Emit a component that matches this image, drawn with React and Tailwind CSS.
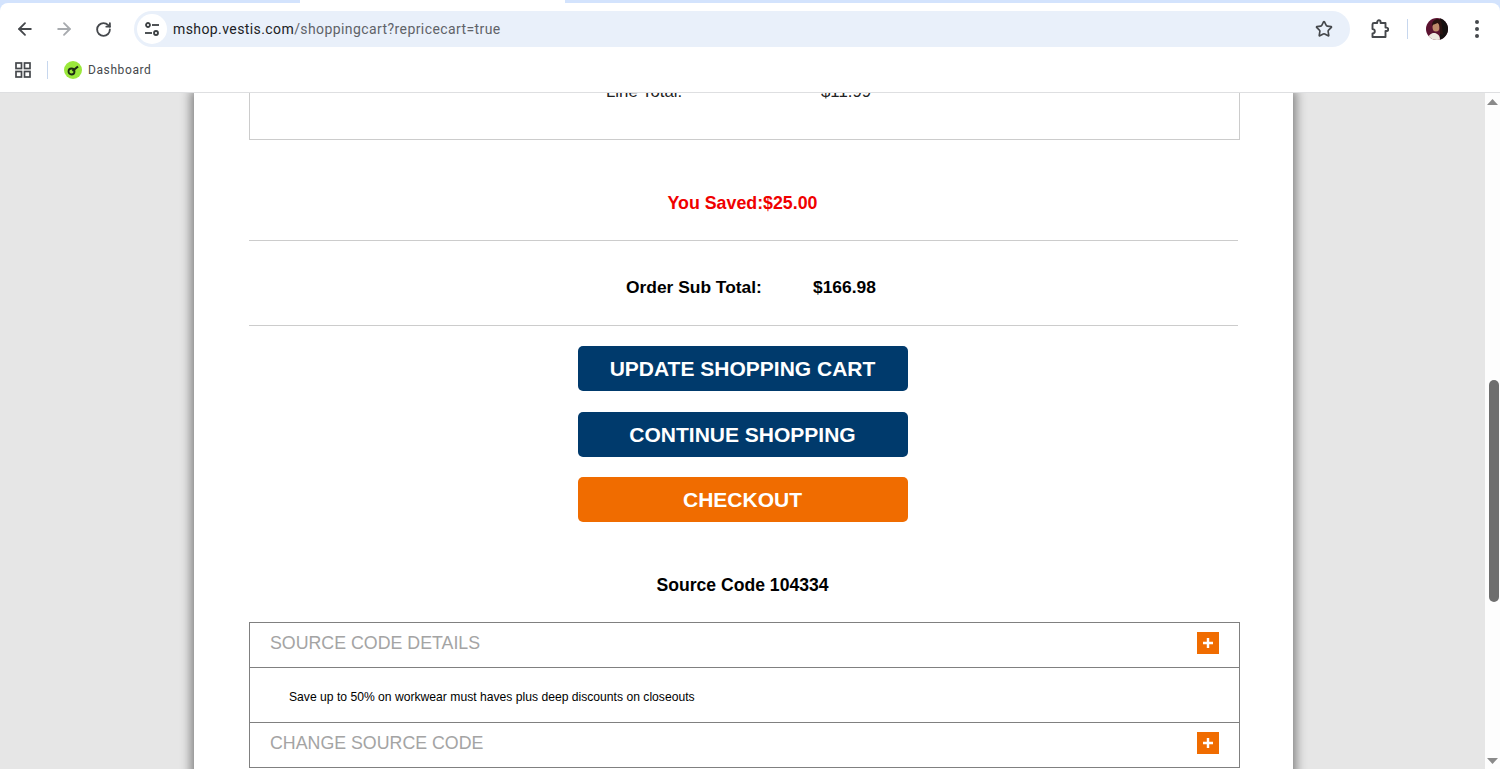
import React from "react";
import { ArrowLeft, ArrowRight, RotateCw, Star } from "lucide-react";

const sans = "font-['Liberation_Sans',Arial,sans-serif]";

function Tune() {
  return (
    <svg width="18" height="18" viewBox="0 0 18 18" fill="none" stroke="#3c4043" strokeWidth="1.8">
      <circle cx="5" cy="5" r="2" />
      <path d="M9 5h7" />
      <circle cx="13" cy="13" r="2" />
      <path d="M2 13h7" />
    </svg>
  );
}

function Puzzle() {
  return (
    <svg width="20" height="20" viewBox="0 0 20 20" fill="none" stroke="#45484c" strokeWidth="1.9" strokeLinejoin="round">
      <path d="M5 4h3.2V3a1.7 1.7 0 0 1 3.4 0v1H16.500v4.600h1a1.700 1.700 0 0 1 0 3.400h-1V18H3.500v-3.500c1.500 0 2.300-.9 2.300-2.200S5 10.100 3.500 10.100V5.500C3.500 4.600 4.100 4 5 4z" />
    </svg>
  );
}

function Apps() {
  return (
    <svg width="16" height="16" viewBox="0 0 16 16" fill="none" stroke="#45484c" strokeWidth="1.7">
      <rect x="1" y="1" width="5.500" height="5.500" />
      <rect x="9.500" y="1" width="5.500" height="5.500" />
      <rect x="1" y="9.500" width="5.500" height="5.500" />
      <rect x="9.500" y="9.500" width="5.500" height="5.500" />
    </svg>
  );
}

function Favicon() {
  return (
    <svg width="18" height="18" viewBox="0 0 18 18">
      <circle cx="9" cy="9" r="9" fill="#9be83c" />
      <circle cx="7.500" cy="10.500" r="3" fill="none" stroke="#1c2a12" strokeWidth="1.800" />
      <path d="M8.500 10 14 5.500" stroke="#1c2a12" strokeWidth="2.200" />
    </svg>
  );
}

function Avatar() {
  return (
    <svg width="22" height="22" viewBox="0 0 22 22">
      <defs>
        <clipPath id="av"><circle cx="11" cy="11" r="11" /></clipPath>
      </defs>
      <g clipPath="url(#av)">
        <rect width="22" height="22" fill="#5b1230" />
        <rect x="14" width="8" height="22" fill="#15100f" />
        <path d="M2 22c0-5 3-7 6-7s6 2 6 7z" fill="#efe6df" />
        <ellipse cx="10" cy="9" rx="3.500" ry="4.500" fill="#c08a6a" />
        <path d="M6 8c0-5 3-7 6-7s4 4 4 8l1 8-3-1c0-4 0-9-2-11-2 1-5 1-6 3z" fill="#2a1210" />
      </g>
    </svg>
  );
}

function Plus() {
  return (
    <div className="w-[22px] h-[22px] mb-[5px] bg-[#f06c00] flex items-center justify-center">
      <svg width="12" height="12" viewBox="0 0 12 12">
        <path d="M6 1v10M1 6h10" stroke="#fff" strokeWidth="2.400" />
      </svg>
    </div>
  );
}

function CartButton({ label, color, mt }) {
  return (
    <button className={`w-[330px] h-[45px] rounded-[5px] text-white text-[21px] font-bold ${color} ${mt} ${sans}`}>
      {label}
    </button>
  );
}

function AccordionHead({ label, border, height }) {
  return (
    <div className={`flex items-center justify-between pl-5 pr-[20px] ${height} ${border}`}>
      <span className="text-[17.8px] text-[#a4a4a4] leading-none mb-[2px]">{label}</span>
      <Plus />
    </div>
  );
}

export default function App() {
  return (
    <div className={`h-[769px] w-[1500px] overflow-hidden flex flex-col bg-[#d3e3fd] ${sans}`}>
      <div className="h-[3px] shrink-0 flex">
        <div className="ml-[300px] w-[265px] bg-white" />
      </div>

      <div className="h-[47px] shrink-0 flex items-center bg-white rounded-t-[8px] pt-[5px]">
        <div className="w-[134px] shrink-0 flex items-center pl-[15px] gap-[19px]">
          <ArrowLeft size={20} color="#45484c" strokeWidth={2.200} />
          <ArrowRight size={20} color="#a8abaf" strokeWidth={2.200} />
          <RotateCw size={17} color="#45484c" strokeWidth={2.600} className="ml-[2px]" />
        </div>
        <div className="w-[1216px] h-[36px] rounded-full bg-[#e9f0fa] flex items-center pl-[3px] pr-[17px]">
          <div className="w-[30px] h-[30px] rounded-full bg-white flex items-center justify-center shrink-0">
            <Tune />
          </div>
          <div className="ml-[6px] flex-1 text-[14px] tracking-[0.41px] font-['Roboto',sans-serif] text-[#5f6368] whitespace-nowrap">
            <span className="text-[#202124]">mshop.vestis.com</span>/shoppingcart?repricecart=true
          </div>
          <Star size={18} color="#45484c" strokeWidth={2.200} />
        </div>
        <div className="flex items-center ml-[19px]">
          <Puzzle />
          <div className="w-px h-[20px] bg-[#c7d7ee] ml-[18px]" />
          <div className="ml-[18px]"><Avatar /></div>
          <div className="ml-[27px] flex flex-col gap-[3px]">
            <div className="w-[4px] h-[4px] rounded-full bg-[#45484c]" />
            <div className="w-[4px] h-[4px] rounded-full bg-[#45484c]" />
            <div className="w-[4px] h-[4px] rounded-full bg-[#45484c]" />
          </div>
        </div>
      </div>

      <div className="h-[43px] shrink-0 flex items-center pl-[15px] pb-[3px] border-b border-[#dedfe1] bg-white">
        <Apps />
        <div className="w-px h-[18px] bg-[#c7d7ee] ml-[16px]" />
        <div className="ml-[16px]"><Favicon /></div>
        <span className="ml-[6px] text-[12px] tracking-[0.6px] text-[#45484c] font-['Roboto',sans-serif]">Dashboard</span>
      </div>

      <div className="flex-1 min-h-0 flex overflow-hidden bg-[#e6e6e6]">
        <div className="flex-1 flex justify-center overflow-hidden pl-[194px] pr-[192px]">
          <div className="w-[1099px] shrink-0 bg-white px-[55px] shadow-[0_0_10px_3px_rgba(0,0,0,0.45)] h-[1000px]">
            <div className="h-[47px] w-[991px] border-x border-b border-[#cccccc] flex text-[16.8px] text-[#222] overflow-hidden">
              <div className="flex -mt-[10px] h-[18px] leading-[18px]">
                <span className="ml-[356px] w-[215px]">Line Total:</span>
                <span>$11.99</span>
              </div>
            </div>

            <div className="h-[101px] w-[989px] border-b border-[#cccccc] flex items-center justify-center text-[17.8px] font-bold text-[#f00000] pt-[27px] pr-[2px]">
              <span>You Saved:$25.00</span>
            </div>

            <div className="h-[85px] w-[989px] border-b border-[#cccccc] flex items-center text-[17.4px] font-bold text-black">
              <span className="ml-[377px] w-[187px] mt-[8px]">Order Sub Total:</span>
              <span className="mt-[8px]">$166.98</span>
            </div>

            <div className="flex flex-col items-center w-[987px]">
              <CartButton label="UPDATE SHOPPING CART" color="bg-[#003a6c]" mt="mt-[20px]" />
              <CartButton label="CONTINUE SHOPPING" color="bg-[#003a6c]" mt="mt-[21px]" />
              <CartButton label="CHECKOUT" color="bg-[#f06c00]" mt="mt-[20px]" />
              <div className="mt-[53px] h-[20px] leading-[20px] text-[17.6px] font-bold text-black">Source Code 104334</div>
            </div>

            <div className="mt-[27px] w-[991px] border border-[#808080]">
              <AccordionHead label="SOURCE CODE DETAILS" border="border-b border-[#808080]" height="h-[45px]" />
              <div className="h-[55px] flex items-center pl-[39px] pt-[4px] text-[12.15px] text-black border-b border-[#808080]">
                Save up to 50% on workwear must haves plus deep discounts on closeouts
              </div>
              <AccordionHead label="CHANGE SOURCE CODE" border="" height="h-[44px]" />
            </div>
          </div>
        </div>

        <div className="w-[15px] shrink-0 bg-[#fdfdfd] flex flex-col items-center">
          <svg className="mt-[6px]" width="11" height="6" viewBox="0 0 11 6"><path d="M5.500 0 11 6H0z" fill="#8a8a8a" /></svg>
          <div className="mt-[275px] ml-[2px] w-[10px] h-[222px] rounded-full bg-[#6e6e6e]" />
          <div className="flex-1" />
          <svg className="mb-[5px]" width="11" height="6" viewBox="0 0 11 6"><path d="M0 0h11L5.500 6z" fill="#8a8a8a" /></svg>
        </div>
      </div>
    </div>
  );
}
